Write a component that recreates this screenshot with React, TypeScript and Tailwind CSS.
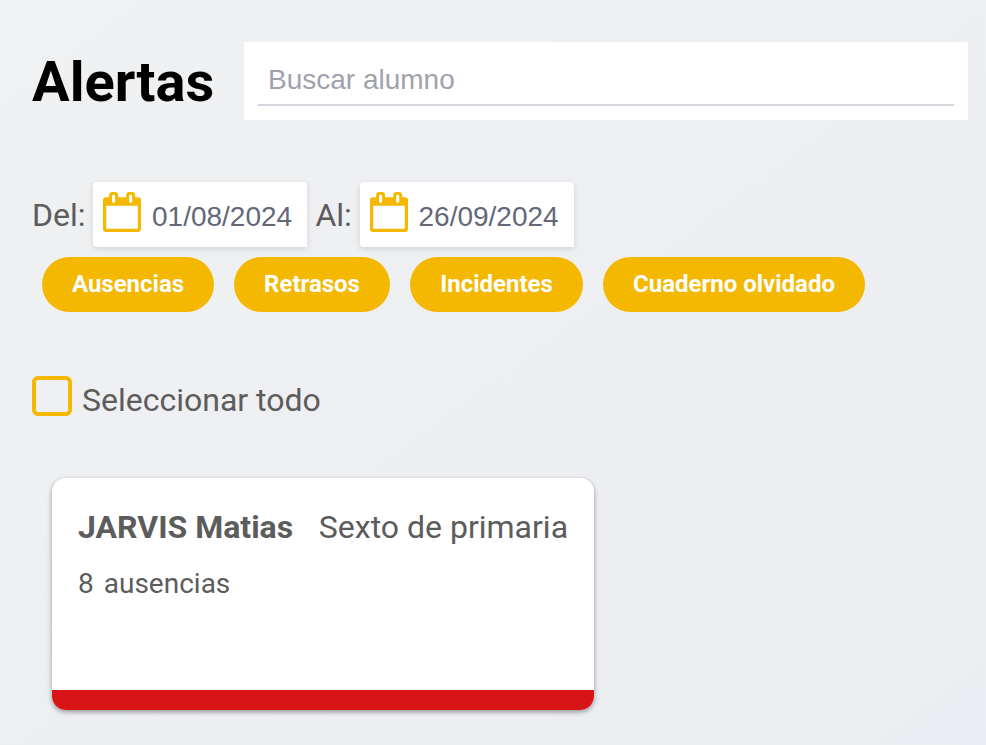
import React, { useState } from 'react';

interface Student {
  id: string;
  name: string;
  grade: string;
  count: number;
  label: string;
}

const filters = [
  { label: 'Ausencias', width: 'w-[172px]' },
  { label: 'Retrasos', width: 'w-[156px]' },
  { label: 'Incidentes', width: 'w-[173px]' },
  { label: 'Cuaderno olvidado', width: 'w-[262px]' }];

const students: Student[] = [
  { id: '1', name: 'JARVIS Matias', grade: 'Sexto de primaria', count: 8, label: 'ausencias' }];

function CalendarIcon() {
  return (
    <svg className="block h-10 w-[38px] shrink-0" viewBox="0 0 38 40" fill="none">
      <rect x="1.6" y="7" width="34.8" height="31.4" rx="1.6" stroke="#f4b800" strokeWidth="3.2" />
      <path d="M0 13.8V8a2.6 2.6 0 0 1 2.6-2.6h32.8A2.6 2.6 0 0 1 38 8v5.8Z" fill="#f4b800" />
      <rect x="6.1" y="0" width="9" height="13" rx="3.4" fill="#f4b800" />
      <rect x="23.2" y="0" width="9" height="13" rx="3.4" fill="#f4b800" />
      <rect x="9.1" y="2.8" width="3" height="8" rx="1.2" fill="white" />
      <rect x="26.2" y="2.8" width="3" height="8" rx="1.2" fill="white" />
    </svg>);

}

function DateField({ value }: {value: string;}) {
  return (
    <button className="flex h-[65px] w-[214px] items-start rounded-[4px] rounded-br-none bg-white pl-[10px] pt-[10px] shadow-[0_2px_6px_rgba(0,0,0,0.12)]">
      <CalendarIcon />
      <span className="ml-[11px] mt-[9px] font-['Liberation_Sans',sans-serif] text-[28px] leading-[32px] text-[#636879]">
        {value}
      </span>
    </button>);

}

function StudentCard({ student }: {student: Student;}) {
  return (
    <div className="flex h-[232px] w-[542px] flex-col overflow-hidden rounded-[14px] bg-white shadow-[0_2px_5px_rgba(0,0,0,0.38)]">
      <div className="flex-1 whitespace-nowrap pl-[26px] pt-[29px]">
        <div className="flex text-[32px] leading-[40px]">
          <span className="w-[240.8px] font-bold">{student.name}</span>
          <span>{student.grade}</span>
        </div>
        <div className="mt-[19px] flex gap-[10px] text-[28px] leading-[36px]">
          <span>{student.count}</span>
          <span>{student.label}</span>
        </div>
      </div>
      <div className="h-5 bg-[#d91416]" />
    </div>);

}

export default function App() {
  const [search, setSearch] = useState('');
  const [allSelected, setAllSelected] = useState(false);
  return (
    <div className="h-[745px] w-[986px] overflow-hidden bg-linear-to-br from-[#f0f1f2] to-[#ecedf2] pl-8 pr-[18px] pt-[42px] font-[Roboto,sans-serif] text-[#5c5c5c]">
      {/* Title and search */}
      <div className="flex h-[78px]">
        <h1 className="w-[212px] pt-[8px] text-[56px] font-bold leading-[64px] text-black">Alertas</h1>
        <div className="flex-1 bg-white px-[14px]">
          <input
            value={search}
            onChange={(e) => setSearch(e.target.value)}
            placeholder="Buscar alumno"
            className="block h-[64px] w-full border-b-2 border-[#d5d6de] pl-[10px] pt-[14px] font-['Liberation_Sans',sans-serif] text-[28px] text-[#636879] outline-none placeholder:text-[#9fa2ad]" />

        </div>
      </div>

      {/* Date range */}
      <div className="mt-[62px] flex h-[65px] items-center whitespace-nowrap text-[32px] leading-[40px]">
        <span className="w-[61px]">Del:</span>
        <DateField value="01/08/2024" />
        <span className="w-[52.5px] pl-[8.4px]">Al:</span>
        <DateField value="26/09/2024" />
      </div>

      {/* Filters */}
      <div className="ml-[10px] mt-[10px] flex gap-5">
        {filters.map((filter) =>
        <button
          key={filter.label}
          className={`${filter.width} h-[55px] whitespace-nowrap rounded-full bg-[#f4b800] text-center text-[24px] font-bold leading-[53px] text-white`}>

            {filter.label}
          </button>
        )}
      </div>

      <div className="mt-[64px] flex h-10 items-start">
        <button
          aria-label="Seleccionar todo"
          onClick={() => setAllSelected(!allSelected)}
          className={`size-10 rounded-[6px] border-4 border-[#f4b800] ${allSelected ? 'bg-[#f4b800]' : ''}`} />

        <span className="ml-[10px] mt-[4px] text-[32px] leading-[40px]">Seleccionar todo</span>
      </div>

      <div className="ml-5 mt-[62px]">
        {students.map((student) =>
        <StudentCard key={student.id} student={student} />
        )}
      </div>
    </div>);

}
